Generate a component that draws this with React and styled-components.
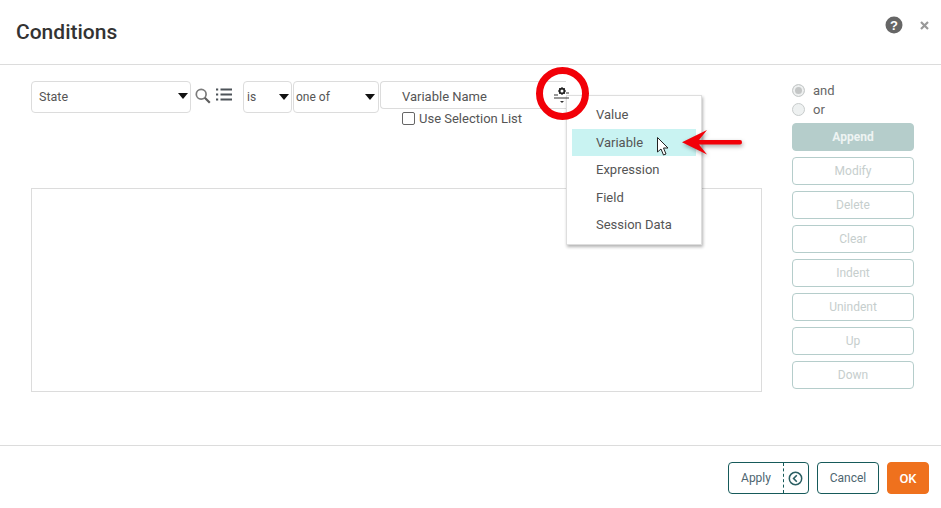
import React from 'react'
import styled, { createGlobalStyle } from 'styled-components'

const Global = createGlobalStyle`
html, body { margin: 0; padding: 0; background: #fff; overflow: hidden; }
* { box-sizing: border-box; }
`

const Dialog = styled.div`
position: relative;
width: 941px;
height: 508px;
display: flex;
flex-direction: column;
background: #fff;
font-family: Roboto, "Liberation Sans", sans-serif;
color: #555;
overflow: hidden;
`

const Header = styled.div`
height: 65px;
flex: none;
display: flex;
align-items: flex-start;
padding: 16px 12px 0 16px;
border-bottom: 1px solid #dcdcdc;
`

const Title = styled.div`
flex: 1;
font-size: 21px;
line-height: 32px;
font-weight: 500;
color: #333;
`

const HeaderIcon = styled.svg`
display: block;
flex: none;
margin-left: ${p => p.$gap}px;
margin-top: ${p => p.$top}px;
`

const Content = styled.div`
flex: 1;
display: flex;
padding: 16px 27px 0 31px;
`

const Main = styled.div`
width: 731px;
flex: none;
display: flex;
flex-direction: column;
`

const Toolbar = styled.div`
display: flex;
align-items: flex-start;
height: 107px;
`

const SelectBox = styled.div`
width: ${p => p.$w}px;
height: 32px;
margin-left: ${p => p.$ml || 0}px;
flex: none;
display: flex;
align-items: center;
justify-content: space-between;
padding: 0 ${p => p.$pr}px ${p => p.$pb}px ${p => p.$pl}px;
border: 1px solid #dcdcdc;
border-radius: 4px;
font-size: ${p => p.$size}px;
color: #555;
`

const Caret = styled.span`
width: 0;
height: 0;
border-left: 5px solid transparent;
border-right: 5px solid transparent;
border-top: 6px solid #111;
`

const ToolIcon = styled.svg`
display: block;
flex: none;
margin-left: ${p => p.$ml}px;
margin-top: ${p => p.$mt}px;
`

const ValueColumn = styled.div`
width: 186px;
margin-left: 1px;
flex: none;
`

const ValueInput = styled.div`
height: 28px;
padding: 2px 0 0 21px;
display: flex;
align-items: center;
border: 1px solid #dcdcdc;
border-right: none;
border-radius: 4px 0 0 4px;
font-size: 13px;
color: #555;
`

const CheckRow = styled.div`
display: flex;
align-items: center;
gap: 4px;
height: 18px;
padding-left: 22px;
font-size: 13px;
color: #555;
`

const Checkbox = styled.span`
width: 13px;
height: 13px;
border: 1px solid #666;
border-radius: 2px;
background: #fff;
`

const ListArea = styled.div`
width: 731px;
height: 204px;
border: 1px solid #dcdcdc;
`

const Side = styled.div`
width: 122px;
margin-left: 30px;
flex: none;
display: flex;
flex-direction: column;
`

const RadioRow = styled.div`
display: flex;
align-items: center;
gap: 8px;
height: 19px;
font-size: 13px;
color: #666;
`

const Radio = styled.span`
width: 13px;
height: 13px;
border-radius: 50%;
border: 1px solid #c8cccc;
background: ${p => p.$on ? '#c4c6c6' : '#eef1f1'};
box-shadow: ${p => p.$on ? 'inset 0 0 0 2px #eef0f0' : 'none'};
`

const RadioGroup = styled.div`
margin-bottom: 4px;
`

const SideButton = styled.div`
height: 28px;
margin-bottom: 6px;
display: flex;
align-items: center;
justify-content: center;
border-radius: 4px;
font-size: 12px;
font-weight: ${p => p.$filled ? 700 : 400};
color: ${p => p.$filled ? '#eef4f3' : '#c6cecd'};
background: ${p => p.$filled ? '#b5cdcb' : '#fff'};
border: 1px solid #b5cdcb;
`

const Footer = styled.div`
height: 63px;
flex: none;
display: flex;
justify-content: flex-end;
gap: 8px;
padding: 16px 12px 0 0;
border-top: 1px solid #dcdcdc;
`

const FootButton = styled.div`
height: 32px;
width: ${p => p.$w}px;
display: flex;
align-items: center;
justify-content: center;
border: 1px solid ${p => p.$primary ? '#ef711d' : '#165a5a'};
border-radius: 4px;
background: ${p => p.$primary ? '#ef711d' : '#fff'};
color: ${p => p.$primary ? '#fff' : '#4e6670'};
font-size: ${p => p.$primary ? 13 : 12}px;
font-weight: ${p => p.$primary ? 500 : 400};
`

const ApplyLabel = styled.span`
flex: 1;
text-align: center;
`

const ApplyIcon = styled.span`
width: 25px;
height: 100%;
padding-right: 2px;
display: flex;
align-items: center;
justify-content: center;
border-left: 1px dashed #165a5a;
`

const Menu = styled.div`
position: absolute;
left: 566px;
top: 95px;
width: 136px;
height: 150px;
padding: 5px;
background: #fff;
border: 1px solid #dedede;
box-shadow: 1px 2px 3px rgba(0, 0, 0, 0.3);
`

const MenuItem = styled.div`
height: 27.5px;
display: flex;
align-items: center;
padding-left: 24px;
font-size: 13px;
color: #555;
background: ${p => p.$active ? '#c9f3f2' : 'transparent'};
`

const Overlay = styled.svg`
position: absolute;
left: ${p => p.$x}px;
top: ${p => p.$y}px;
display: block;
filter: ${p => p.$shadow ? 'drop-shadow(1px 2px 2px rgba(0, 0, 0, 0.35))' : 'none'};
`

const buttons = ['Modify', 'Delete', 'Clear', 'Indent', 'Unindent', 'Up', 'Down']
const menuItems = ['Value', 'Variable', 'Expression', 'Field', 'Session Data']

export default function App() {
  return (
    <Dialog>
      <Global />
      <Header>
        <Title>Conditions</Title>
        <HeaderIcon $gap={0} $top={0} width="18" height="18" viewBox="0 0 18 18">
          <circle cx="9" cy="9" r="8.5" fill="#666" />
          <text x="9" y="13.5" textAnchor="middle" fontSize="13" fontWeight="900" fontFamily="Liberation Sans, sans-serif" fill="#fff">?</text>
        </HeaderIcon>
        <HeaderIcon $gap={17} $top={5} width="9" height="9" viewBox="0 0 9 9">
          <path d="M1 1l7 7M8 1l-7 7" stroke="#999" strokeWidth="2.2" />
        </HeaderIcon>
      </Header>
      <Content>
        <Main>
          <Toolbar>
            <SelectBox $w={160} $pl={7} $pr={2} $pb={2} $size={12.5}>State<Caret /></SelectBox>
            <ToolIcon $ml={4} $mt={7} width="16" height="16" viewBox="0 0 16 16">
              <circle cx="6.2" cy="6.2" r="4.9" fill="none" stroke="#7b7b7b" strokeWidth="1.7" />
              <path d="M9.8 9.8l5 5" stroke="#5e5e5e" strokeWidth="2.2" />
            </ToolIcon>
            <ToolIcon $ml={5} $mt={7} width="16" height="14" viewBox="0 0 16 14">
              <path d="M0 1.5h2.2M4.5 1.5H16M0 6.5h2.2M4.5 6.5H16M0 11.5h2.2M4.5 11.5H16" stroke="#4d5358" strokeWidth="2.2" />
            </ToolIcon>
            <SelectBox $ml={11} $w={49} $pl={3} $pr={2} $pb={1} $size={12}>is<Caret /></SelectBox>
            <SelectBox $ml={1} $w={86} $pl={2} $pr={3} $pb={1} $size={12}>one of<Caret /></SelectBox>
            <ValueColumn>
              <ValueInput>Variable Name</ValueInput>
              <CheckRow><Checkbox />Use Selection List</CheckRow>
            </ValueColumn>
          </Toolbar>
          <ListArea />
        </Main>
        <Side>
          <RadioGroup>
            <RadioRow><Radio $on />and</RadioRow>
            <RadioRow><Radio />or</RadioRow>
          </RadioGroup>
          <SideButton $filled>Append</SideButton>
          {buttons.map(b => <SideButton key={b}>{b}</SideButton>)}
        </Side>
      </Content>
      <Footer>
        <FootButton $w={81}>
          <ApplyLabel>Apply</ApplyLabel>
          <ApplyIcon>
            <svg width="15" height="15" viewBox="0 0 15 15">
              <circle cx="7.5" cy="7.5" r="6.2" fill="none" stroke="#2b5f63" strokeWidth="1.5" />
              <path d="M8.8 4.2L5.6 7.5l3.2 3.3" fill="none" stroke="#2b5f63" strokeWidth="1.6" />
            </svg>
          </ApplyIcon>
        </FootButton>
        <FootButton $w={62}>Cancel</FootButton>
        <FootButton $w={42} $primary>OK</FootButton>
      </Footer>

      <Menu>
        {menuItems.map(m => <MenuItem key={m} $active={m === 'Variable'}>{m}</MenuItem>)}
      </Menu>

      <Overlay $x={552} $y={85} width="20" height="20" viewBox="0 0 20 20">
        <circle cx="10" cy="6" r="2.4" fill="none" stroke="#222" strokeWidth="1.8" />
        <path d="M10 2v8M6 6h8M7.2 3.2l5.6 5.6M12.8 3.2l-5.6 5.6" stroke="#222" strokeWidth="1" strokeDasharray="1.2 5.6" />
        <path d="M2 10h4M14 8h3M2 13h15" stroke="#333" strokeWidth="1.2" />
        <path d="M8 16h4l-2 2z" fill="#333" />
      </Overlay>
      <Overlay $x={534} $y={65} width="58" height="58" viewBox="0 0 58 58">
        <circle cx="28.5" cy="28.5" r="23" fill="none" stroke="#f20008" strokeWidth="7" />
      </Overlay>
      <Overlay $x={656} $y={137} width="14" height="20" viewBox="0 0 14 20">
        <path d="M1.5 0.5v14.5l3.5-3 2.5 6 2.5-1-2.5-6h4.5z" fill="#fff" stroke="#222" strokeWidth="1" />
      </Overlay>
      <Overlay $shadow $x={680} $y={128} width="66" height="30" viewBox="0 0 66 30">
        <path d="M2 14.3L27 2l-8 10h41q2 0 2 2.3t-2 2.3H19l8 10z" fill="#f20008" />
      </Overlay>
    </Dialog>
  )
}
